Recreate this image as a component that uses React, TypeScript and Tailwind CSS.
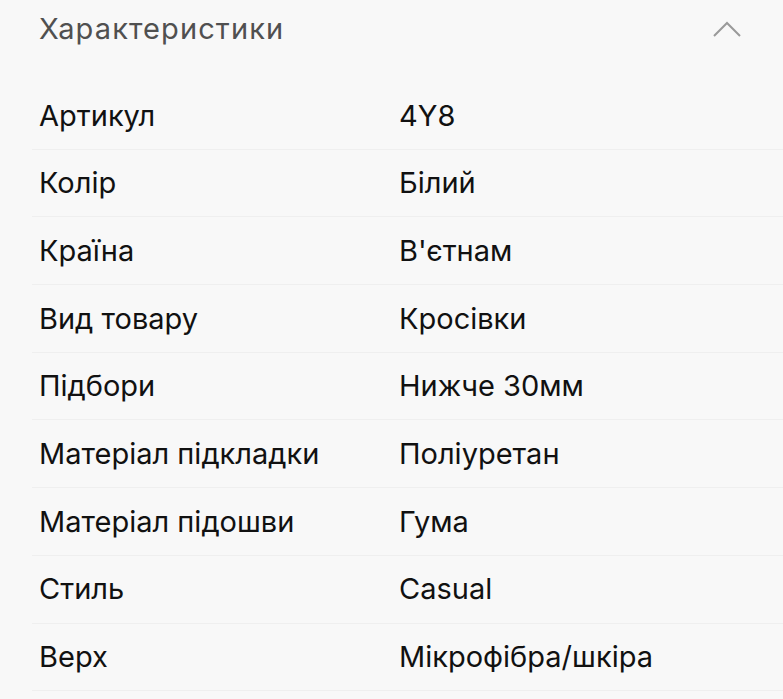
const rows: [string, string][] = [
  ["Артикул", "4Y8"],
  ["Колір", "Білий"],
  ["Країна", "В'єтнам"],
  ["Вид товару", "Кросівки"],
  ["Підбори", "Нижче 30мм"],
  ["Матеріал підкладки", "Поліуретан"],
  ["Матеріал підошви", "Гума"],
  ["Стиль", "Casual"],
  ["Верх", "Мікрофібра/шкіра"],
];

export default function App() {
  return (
    <div className="min-h-[699px] w-[783px] overflow-hidden bg-[#f8f8f8] font-['Inter',sans-serif] text-[29px]">
      <div className="flex h-[57px] items-center justify-between pl-[39px] pr-[42px]">
        <span className="tracking-[1.1px] text-[#505050]">Характеристики</span>
        <svg width="28" height="16" viewBox="0 0 28 16" fill="none">
          <path d="M1 15 L14 2 L27 15" stroke="#9a9a9a" strokeWidth="2" />
        </svg>
      </div>
      <div className="pt-[25px] pl-[32px]">
        {rows.map(([k, v]) => (
          <div
            key={k}
            className="flex h-[67.7px] items-center border-b border-[#efefef] pl-[7px] text-[#111]"
          >
            <span className="w-[360px]">{k}</span>
            <span>{v}</span>
          </div>
        ))}
      </div>
    </div>
  );
}
